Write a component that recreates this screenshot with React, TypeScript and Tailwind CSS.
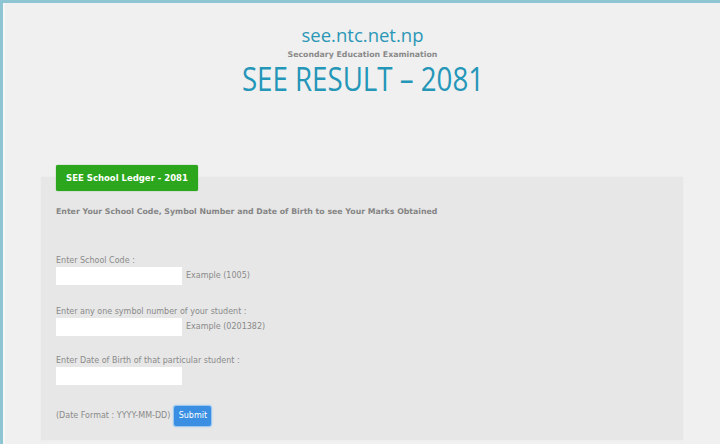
export default function App() {
  const label = "text-[8px] leading-[10px] text-[#8a8a8a] font-['DejaVu_Sans',sans-serif]";
  const input = "w-[126px] h-[18px] bg-white border-0 block";
  const example = "text-[8px] text-[#8a8a8a] font-['DejaVu_Sans',sans-serif] ml-[4px]";
  return (
    <div className="w-[720px] h-[444px] overflow-hidden bg-[#8ec5d2] pt-[3px] pl-[3px]">
      <div className="h-full bg-[#f0f0f0] border-l-2 border-[#f6f6f6] flex flex-col">
        <div className="flex flex-col items-center pt-[22px] text-center">
          <div className="text-[#2b97b6] text-[18.5px] leading-[20px] font-medium font-['Open_Sans',sans-serif]">
            see.ntc.net.np
          </div>
          <div className="mt-[5px] text-[7.8px] leading-[10px] font-bold text-[#8a8a8a] font-['DejaVu_Sans',sans-serif] [font-stretch:92%]">
            Secondary Education Examination
          </div>
          <div className="mt-[2px] inline-block scale-x-[0.865] text-[#2496b8] text-[32px] leading-[34px] font-medium font-['Open_Sans',sans-serif] whitespace-nowrap">
            SEE RESULT – 2081
          </div>
        </div>
        <div className="ml-[36px] mt-[69px] w-[642px] flex flex-col">
          <div className="relative z-10 ml-[15px] w-[142px] h-[26px] bg-[#2ca71d] rounded-[2px] flex items-center justify-center text-white text-[8.5px] font-bold font-['DejaVu_Sans',sans-serif] shadow-[0_0_1px_#1f8a15]">
            SEE School Ledger - 2081
          </div>
          <div className="-mt-[14px] bg-[#e7e7e7] h-[263px] px-[15px] pt-[30px] shadow-[0_0_2px_#e9e9e9]">
            <div className="text-[7.8px] font-bold text-[#858585] font-['DejaVu_Sans',sans-serif] leading-[10px]">
              Enter Your School Code, Symbol Number and Date of Birth to see Your Marks Obtained
            </div>
            <div className="mt-[39px]">
              <div className={label}>Enter School Code :</div>
              <div className="flex items-center mt-[1px]">
                <input className={input} />
                <span className={example}>Example (1005)</span>
              </div>
            </div>
            <div className="mt-[22px]">
              <div className={label}>Enter any one symbol number of your student :</div>
              <div className="flex items-center mt-[1px]">
                <input className={input} />
                <span className={example}>Example (0201382)</span>
              </div>
            </div>
            <div className="mt-[20px]">
              <div className={label}>Enter Date of Birth of that particular student :</div>
              <div className="flex items-center mt-[1px]">
                <input className={input} />
              </div>
            </div>
            <div className="mt-[21px] flex items-center">
              <span className="text-[8px] text-[#8a8a8a] font-['DejaVu_Sans',sans-serif]">(Date Format : YYYY-MM-DD)</span>
              <button className="ml-[4px] w-[37px] h-[20px] bg-[#3a8fe3] rounded-[2px] text-white text-[8px] font-['DejaVu_Sans',sans-serif] shadow-[0_0_0_1px_#9cc8f2,0_0_3px_#7fb8f0]">
                Submit
              </button>
            </div>
          </div>
        </div>
      </div>
    </div>
  );
}
